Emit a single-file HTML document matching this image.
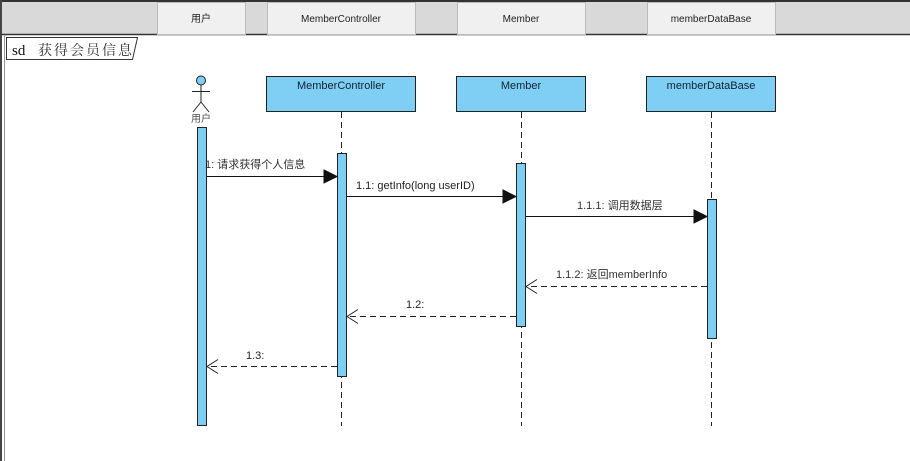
<!DOCTYPE html>
<html><head><meta charset="utf-8"><style>
body{margin:0;width:910px;height:461px;overflow:hidden;background:#fff}
svg{display:block}
text{font-family:"Liberation Sans","Noto Sans CJK SC",sans-serif;font-size:11px;fill:#222}
</style></head><body>
<svg width="910" height="461" viewBox="0 0 910 461" xmlns="http://www.w3.org/2000/svg">
<rect x="0" y="0" width="910" height="35" fill="#d9d9d9"/>
<line x1="0" y1="1" x2="910" y2="1" stroke="#333" stroke-width="2"/>
<line x1="0" y1="34.5" x2="910" y2="34.5" stroke="#333" stroke-width="1.5"/>
<line x1="1" y1="0" x2="1" y2="461" stroke="#444" stroke-width="2"/>
<line x1="4.5" y1="35" x2="4.5" y2="461" stroke="#999" stroke-width="1"/>
<g fill="#f0f0f0" stroke="#bbb">
<rect x="157.5" y="2.5" width="88" height="32"/>
<rect x="267.5" y="2.5" width="148" height="32"/>
<rect x="457.5" y="2.5" width="128" height="32"/>
<rect x="647.5" y="2.5" width="128" height="32"/>
</g>
<text x="201" y="22" text-anchor="middle" style="font-size:10px">用户</text>
<text x="341" y="22" text-anchor="middle" style="font-size:10px">MemberController</text>
<text x="521" y="22" text-anchor="middle" style="font-size:10px">Member</text>
<text x="711" y="22" text-anchor="middle" style="font-size:10px">memberDataBase</text>
<path d="M6.5 59.5 V37.5 H137.5 L132.5 59.5 Z" fill="#fff" stroke="#333"/>
<text x="12" y="55" style="font-family:'Liberation Serif',serif;font-size:15px;fill:#111">sd</text>
<text x="38" y="55" style="font-family:'Noto Serif CJK SC','Noto Sans CJK SC',serif;font-size:14px;fill:#333;letter-spacing:2px">获得会员信息</text>
<circle cx="201" cy="80.5" r="4.5" fill="#7ecff3" stroke="#222"/>
<path d="M201 85 V102 M192 91.5 H210 M201 102 L193 112 M201 102 L209 112" stroke="#222" fill="none"/>
<text x="201" y="122" text-anchor="middle" style="font-size:10px;fill:#555">用户</text>
<g fill="#7ecff3" stroke="#222">
<rect x="266.5" y="76.5" width="149" height="35"/>
<rect x="456.5" y="76.5" width="129" height="35"/>
<rect x="646.5" y="76.5" width="129" height="35"/>
</g>
<text x="341" y="89" text-anchor="middle" style="fill:#123">MemberController</text>
<text x="521" y="89" text-anchor="middle" style="fill:#123">Member</text>
<text x="711" y="89" text-anchor="middle" style="fill:#123">memberDataBase</text>
<g stroke="#222" stroke-dasharray="6,4">
<line x1="341.5" y1="112" x2="341.5" y2="426"/>
<line x1="521.5" y1="112" x2="521.5" y2="426"/>
<line x1="711.5" y1="112" x2="711.5" y2="426"/>
</g>
<g fill="#7ecff3" stroke="#222">
<rect x="197.5" y="127.5" width="9" height="298"/>
<rect x="337.5" y="153.5" width="9" height="223"/>
<rect x="516.5" y="163.5" width="9" height="163"/>
<rect x="707.5" y="199.5" width="9" height="139"/>
</g>
<g stroke="#111" fill="#111">
<line x1="207" y1="176.5" x2="326" y2="176.5"/><path d="M324 170 L337 176.5 L324 183 Z"/>
<line x1="347" y1="196.5" x2="505" y2="196.5"/><path d="M503 190 L516 196.5 L503 203 Z"/>
<line x1="526" y1="216.5" x2="696" y2="216.5"/><path d="M694 210 L707 216.5 L694 223 Z"/>
</g>
<g stroke="#222" fill="none">
<line x1="707" y1="286.5" x2="526" y2="286.5" stroke-dasharray="6,4"/><path d="M537 279.5 L526 286.5 L537 293.5"/>
<line x1="516" y1="316.5" x2="347" y2="316.5" stroke-dasharray="6,4"/><path d="M358 309.5 L347 316.5 L358 323.5"/>
<line x1="337" y1="366.5" x2="207" y2="366.5" stroke-dasharray="6,4"/><path d="M218 359.5 L207 366.5 L218 373.5"/>
</g>
<text x="205" y="168" style="fill:#333">1: 请求获得个人信息</text>
<text x="356" y="189">1.1: getInfo(long userID)</text>
<text x="577" y="209" style="fill:#333">1.1.1: 调用数据层</text>
<text x="556" y="278" style="fill:#333">1.1.2: 返回memberInfo</text>
<text x="406" y="308">1.2:</text>
<text x="246" y="359">1.3:</text>
</svg>
</body></html>
